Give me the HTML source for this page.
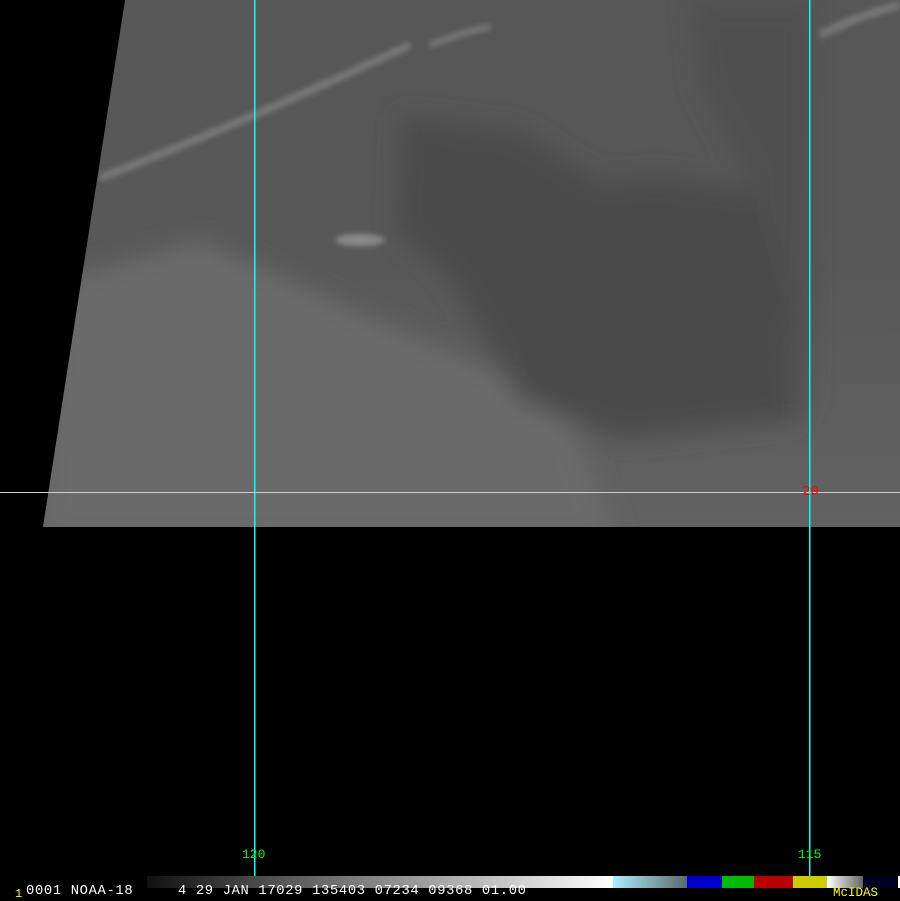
<!DOCTYPE html>
<html><head><style>
body{margin:0;background:#000;width:900px;height:900px;overflow:hidden;position:relative;font-family:"Liberation Mono",monospace}
.t{position:absolute;line-height:14px;white-space:pre}
</style></head><body>
<svg width="900" height="900" style="position:absolute;left:0;top:0">
<defs>
<linearGradient id="g" x1="0" y1="0" x2="0" y2="1">
<stop offset="0" stop-color="#575757"/><stop offset="0.5" stop-color="#585858"/><stop offset="1" stop-color="#626262"/>
</linearGradient>
<linearGradient id="cb" x1="0" x2="1">
<stop offset="0" stop-color="#111"/><stop offset="1" stop-color="#fff"/>
</linearGradient>
<linearGradient id="cy" x1="0" x2="1"><stop offset="0" stop-color="#aef"/><stop offset="1" stop-color="#5a6a6a"/></linearGradient>
<linearGradient id="wg" x1="0" x2="1"><stop offset="0" stop-color="#fff"/><stop offset="1" stop-color="#666"/></linearGradient>
<filter id="b"><feGaussianBlur stdDeviation="12"/></filter>
<filter id="b2"><feGaussianBlur stdDeviation="3"/></filter>
<clipPath id="c"><polygon points="125,0 900,0 900,527 43,527"/></clipPath>
</defs>
<polygon points="125,0 900,0 900,527 43,527" fill="url(#g)"/>
<g clip-path="url(#c)">
<g filter="url(#b)">
<polygon points="60,280 40,540 620,540 560,400 400,330 200,240" fill="#6a6a6a"/>
<polygon points="400,115 520,130 600,180 660,175 760,190 790,290 800,420 620,440 520,400 450,280 395,230" fill="#4c4c4c"/>
<polygon points="690,0 810,0 810,420 790,300 760,200 700,90" fill="#505050"/>
</g>
<g filter="url(#b2)">
<path d="M100,178 Q250,120 410,45" stroke="#999" stroke-width="7" fill="none" opacity="0.55"/>
<path d="M430,45 Q470,30 490,27" stroke="#aaa" stroke-width="5" fill="none" opacity="0.5"/>
<ellipse cx="360" cy="240" rx="25" ry="6" fill="#aaa" opacity="0.6"/>
<path d="M820,35 Q860,15 900,5" stroke="#999" stroke-width="8" fill="none" opacity="0.5"/>
</g>
</g>
<rect x="254" y="0" width="1.5" height="876" fill="#0ff"/>
<rect x="809" y="0" width="1.5" height="876" fill="#0ff"/>
<rect x="0" y="492" width="900" height="1" fill="#ccc"/>
<rect x="147" y="876" width="466" height="12" fill="url(#cb)"/>
<rect x="613" y="876" width="74" height="12" fill="url(#cy)"/>
<rect x="687" y="876" width="35" height="12" fill="#00c"/>
<rect x="722" y="876" width="32" height="12" fill="#0b0"/>
<rect x="754" y="876" width="39" height="12" fill="#b00"/>
<rect x="793" y="876" width="34" height="12" fill="#cc0"/>
<rect x="827" y="876" width="36" height="12" fill="url(#wg)"/>
<rect x="863" y="876" width="35" height="12" fill="#002"/>
<rect x="898" y="876" width="2" height="12" fill="#fff"/>
</svg>
<div class="t" style="left:802px;top:485px;color:#f00;font-size:14px">20</div>
<div class="t" style="left:242px;top:848px;color:#0f0;font-size:13px">120</div>
<div class="t" style="left:798px;top:848px;color:#0f0;font-size:13px">115</div>
<div class="t" style="left:15px;top:887px;color:#ff0;font-size:12px">1</div>
<div class="t" style="left:26px;top:885px;color:#fff;font-size:13.8px;letter-spacing:0.66px">0001 NOAA-18     4 29 JAN 17029 135403 07234 09368 01.00</div>
<div class="t" style="left:833px;top:886px;color:#ff0;font-size:12.5px">McIDAS</div>
</body></html>
